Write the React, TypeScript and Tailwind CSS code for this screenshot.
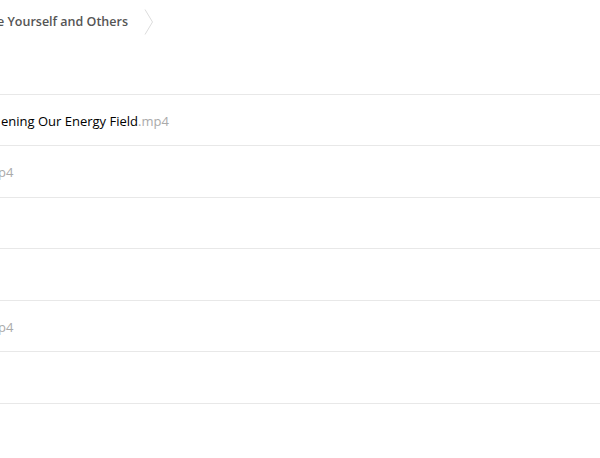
import React from "react";

export default function App() {
  const rows: { name: string; ext: boolean }[] = [
    { name: "ening Our Energy Field", ext: true },
    { name: "", ext: true },
    { name: "", ext: false },
    { name: "", ext: false },
    { name: "", ext: true },
    { name: "", ext: false },
  ];
  return (
    <div
      className="w-[600px] h-[458px] overflow-hidden bg-white"
      style={{ fontFamily: '"Open Sans", sans-serif' }}
    >
      <div className="h-[44px] flex items-center pt-[1px]">
        <div className="flex items-center -ml-[3px]">
          <span className="text-[12.5px] font-semibold text-[#555] whitespace-nowrap">e Yourself and Others</span>
          <svg width="10" height="26" viewBox="0 0 10 26" className="ml-[16px] -mt-[1px]">
            <path d="M1 0.5 L8.5 13 L1 25.5" fill="none" stroke="#dcdcdc" strokeWidth="1" />
          </svg>
        </div>
      </div>
      <div className="mt-[50px] border-t border-[#e8e8e8]">
        {rows.map((r, i) => (
          <div
            key={i}
            className={`flex items-center pt-[3px] border-b border-[#e8e8e8] ${i % 2 === 0 ? "h-[51px]" : "h-[52px]"}`}
          >
            {r.name ? (
              <span className="text-[13px] text-black whitespace-nowrap ml-[1px]">
                {r.name}
                <span className="text-[#aaa]">.mp4</span>
              </span>
            ) : r.ext ? (
              <span className="text-[13px] text-[#aaa] whitespace-nowrap -ml-[2px]">p4</span>
            ) : null}
          </div>
        ))}
      </div>
    </div>
  );
}
